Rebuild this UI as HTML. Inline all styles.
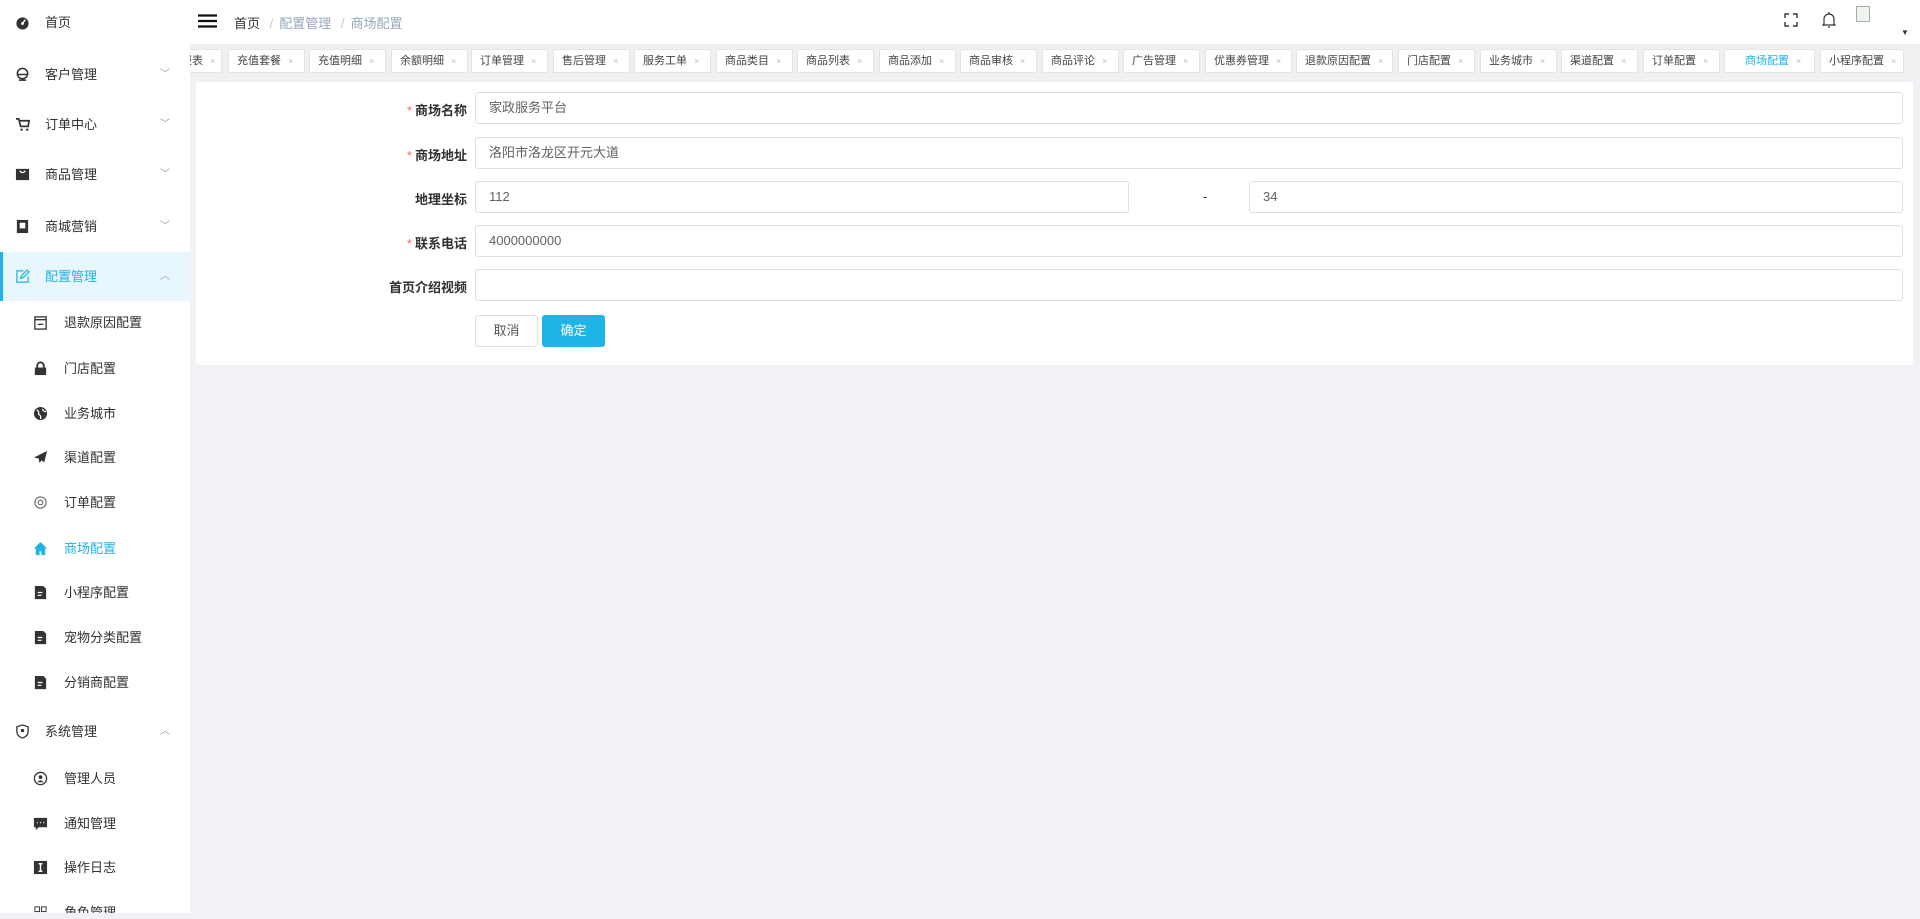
<!DOCTYPE html>
<html><head><meta charset="utf-8"><style>
*{margin:0;padding:0;box-sizing:border-box}
body{width:1920px;height:919px;background:#f0f2f5;font-family:"Liberation Sans","Noto Sans CJK SC",sans-serif;font-size:13px;color:#303133;position:relative;overflow:hidden}
.side{position:absolute;left:0;top:0;width:190px;height:913px;background:#fff;overflow:hidden}
.mi{position:absolute;left:0;width:190px;height:20px;line-height:20px;color:#303133;font-size:13px}
.mi .ic{position:absolute;top:2px;width:15px;height:15px}
.mi .tx{position:absolute}
.mi .ch{position:absolute;left:160px;top:0;color:#999;font-size:10px}
.top .ic{left:15px}.top .tx{left:45px}
.sub .ic{left:33px}.sub .tx{left:64px}
.act{position:absolute;left:0;top:252px;width:190px;height:49px;background:#e8f6fd;border-left:3px solid #1fb4e6}
.header{position:absolute;left:190px;top:0;width:1730px;height:44px;background:#fff}
.tabbar{position:absolute;left:190px;top:44px;width:1730px;height:34px;background:#f0f0f0;overflow:hidden}
.tab{position:absolute;top:5px;height:24px;line-height:22px;background:#fff;border:1px solid #e4e4e4;font-size:11px;color:#444;padding-left:8px;white-space:nowrap}
.tab i{font-style:normal;color:#bbb;font-size:9px;margin-left:7px}
.card{position:absolute;left:196px;top:82px;width:1717px;height:283px;background:#fff;border-radius:3px}
.lbl{position:absolute;right:1453px;font-size:13px;color:#303133;font-weight:bold;text-align:right;white-space:nowrap}
.lbl b{color:#f56c6c;font-weight:normal;margin-right:3px}
.inp{position:absolute;height:32px;border:1px solid #dcdfe6;border-radius:3px;padding-left:13px;line-height:30px;color:#606266;font-size:13px}
.btn{position:absolute;height:32px;border-radius:3px;line-height:30px;text-align:center;font-size:13px}
</style></head><body>
<div class="side">
<div class="act"></div>
<div class="mi top" style="top:13px"><svg class="ic" viewBox="0 0 16 16"><circle cx="8" cy="9" r="6.5" fill="#333"/><circle cx="8" cy="9" r="1.5" fill="#fff"/><path d="M8 9 L11 5" stroke="#fff" stroke-width="1.5"/></svg><span class="tx">首页</span></div>
<div class="mi top" style="top:65px"><svg class="ic" viewBox="0 0 16 16"><circle cx="8" cy="7" r="5.5" fill="none" stroke="#333" stroke-width="1.6"/><path d="M3 8h10M4 14h8" stroke="#333" stroke-width="1.6"/></svg><span class="tx">客户管理</span><span class="ch">﹀</span></div>
<div class="mi top" style="top:115px"><svg class="ic" viewBox="0 0 16 16"><path d="M1 2h3l2 8h8l1-6H5" fill="none" stroke="#333" stroke-width="1.8"/><circle cx="7" cy="13.5" r="1.3" fill="#333"/><circle cx="13" cy="13.5" r="1.3" fill="#333"/></svg><span class="tx">订单中心</span><span class="ch">﹀</span></div>
<div class="mi top" style="top:165px"><svg class="ic" viewBox="0 0 16 16"><rect x="1" y="2" width="14" height="12" fill="#333"/><path d="M5 4q3 4 6 0" stroke="#fff" fill="none" stroke-width="1.3"/></svg><span class="tx">商品管理</span><span class="ch">﹀</span></div>
<div class="mi top" style="top:217px"><svg class="ic" viewBox="0 0 16 16"><rect x="2" y="1" width="12" height="14" fill="#333"/><rect x="5" y="4" width="6" height="6" fill="#fff"/></svg><span class="tx">商城营销</span><span class="ch">﹀</span></div>
<div class="mi top" style="top:267px;color:#1fb4e6"><svg class="ic" viewBox="0 0 16 16"><path d="M9 2H2v12h12V8M6 10l1-3 6-6 2 2-6 6z" fill="none" stroke="#1fb4e6" stroke-width="1.3"/></svg><span class="tx">配置管理</span><span class="ch">︿</span></div>
<div class="mi sub" style="top:313px"><svg class="ic" viewBox="0 0 16 16"><rect x="2" y="2" width="12" height="13" fill="none" stroke="#333" stroke-width="1.4"/><path d="M2 5h12M5 10h6" stroke="#333" stroke-width="1.4"/></svg><span class="tx">退款原因配置</span></div>
<div class="mi sub" style="top:359px"><svg class="ic" viewBox="0 0 16 16"><path d="M4.5 7V5a3.5 3.5 0 0 1 7 0v2" fill="none" stroke="#333" stroke-width="2"/><rect x="2" y="7" width="12" height="8" fill="#333"/></svg><span class="tx">门店配置</span></div>
<div class="mi sub" style="top:404px"><svg class="ic" viewBox="0 0 16 16"><circle cx="8" cy="8" r="7" fill="#333"/><path d="M4 4q3 2 2 5 3 1 2 5M10 3q1 3 4 3" stroke="#fff" fill="none" stroke-width="1.3"/></svg><span class="tx">业务城市</span></div>
<div class="mi sub" style="top:448px"><svg class="ic" viewBox="0 0 16 16"><path d="M15 1L1 8l5 1 1 5 2-3 3 2z" fill="#333"/></svg><span class="tx">渠道配置</span></div>
<div class="mi sub" style="top:493px"><svg class="ic" viewBox="0 0 16 16"><circle cx="8" cy="8" r="6" fill="none" stroke="#666" stroke-width="1.2"/><circle cx="8" cy="8" r="2.5" fill="none" stroke="#666" stroke-width="1.2"/></svg><span class="tx">订单配置</span></div>
<div class="mi sub" style="top:539px;color:#1fb4e6"><svg class="ic" viewBox="0 0 16 16"><path d="M8 1L1 8h2v7h4v-4h2v4h4V8h2z" fill="#1fb4e6"/></svg><span class="tx">商场配置</span></div>
<div class="mi sub" style="top:583px"><svg class="ic" viewBox="0 0 16 16"><path d="M2 1h9l3 3v11H2z" fill="#333"/><path d="M5 8h5M5 11h4" stroke="#fff" stroke-width="1.3"/></svg><span class="tx">小程序配置</span></div>
<div class="mi sub" style="top:628px"><svg class="ic" viewBox="0 0 16 16"><path d="M2 1h9l3 3v11H2z" fill="#333"/><path d="M5 8h5M5 11h4" stroke="#fff" stroke-width="1.3"/></svg><span class="tx">宠物分类配置</span></div>
<div class="mi sub" style="top:673px"><svg class="ic" viewBox="0 0 16 16"><path d="M2 1h9l3 3v11H2z" fill="#333"/><path d="M5 8h5M5 11h4" stroke="#fff" stroke-width="1.3"/></svg><span class="tx">分销商配置</span></div>
<div class="mi top" style="top:722px"><svg class="ic" viewBox="0 0 16 16"><path d="M8 1l6 2v5q0 5-6 7-6-2-6-7V3z" fill="none" stroke="#333" stroke-width="1.4"/><circle cx="8" cy="7" r="1.8" fill="#333"/></svg><span class="tx">系统管理</span><span class="ch">︿</span></div>
<div class="mi sub" style="top:769px"><svg class="ic" viewBox="0 0 16 16"><circle cx="8" cy="8" r="6.5" fill="none" stroke="#333" stroke-width="1.4"/><circle cx="8" cy="6.5" r="2" fill="#333"/><path d="M4.5 12q3.5-4 7 0" fill="#333"/></svg><span class="tx">管理人员</span></div>
<div class="mi sub" style="top:814px"><svg class="ic" viewBox="0 0 16 16"><path d="M1 2h14v10H6l-3 3v-3H1z" fill="#333"/><path d="M4 7h1M7.5 7h1M11 7h1" stroke="#fff" stroke-width="1.5"/></svg><span class="tx">通知管理</span></div>
<div class="mi sub" style="top:858px"><svg class="ic" viewBox="0 0 16 16"><rect x="1" y="1" width="14" height="14" fill="#333"/><path d="M6 4h4M8 4v8M6 12h4" stroke="#fff" stroke-width="1.5"/></svg><span class="tx">操作日志</span></div>
<div class="mi sub" style="top:903px"><svg class="ic" viewBox="0 0 16 16"><rect x="2" y="2" width="5" height="5" fill="none" stroke="#333"/><rect x="9" y="2" width="5" height="5" fill="none" stroke="#333"/><rect x="2" y="9" width="5" height="5" fill="none" stroke="#333"/><rect x="9" y="9" width="5" height="5" fill="none" stroke="#333"/></svg><span class="tx">角色管理</span></div>
</div>
<div class="header">
<svg style="position:absolute;left:8px;top:14px" width="19" height="14" viewBox="0 0 19 14"><path d="M0 1.5h19M0 7h19M0 12.5h19" stroke="#111" stroke-width="2.2"/></svg>
<div style="position:absolute;left:44px;top:13px;font-size:13px;color:#303133">首页 <span style="color:#c0c4cc;margin:0 6px">/</span><span style="color:#97a8be">配置管理</span> <span style="color:#c0c4cc;margin:0 6px">/</span><span style="color:#97a8be">商场配置</span></div>
<svg style="position:absolute;left:1594px;top:13px" width="14" height="14" viewBox="0 0 14 14"><path d="M1 5V1h4M9 1h4v4M13 9v4H9M5 13H1V9" stroke="#333" stroke-width="1.4" fill="none"/></svg>
<svg style="position:absolute;left:1632px;top:11px" width="14" height="18" viewBox="0 0 14 18"><path d="M2 13V8a5 5 0 0 1 10 0v5l1 1H1z M7 1v2M6 16h2" stroke="#333" stroke-width="1.2" fill="none"/></svg>
<div style="position:absolute;left:1666px;top:6px;width:14px;height:16px;border:1px solid #aaa;background:#eef4ee"></div>
<div style="position:absolute;left:1711px;top:28px;font-size:8px;color:#333">▼</div>
</div>
<div class="tabbar">
<div class="tab" style="left:-40px;width:72px">余额报表<i>×</i></div>
<div class="tab" style="left:38px;width:77px">充值套餐<i>×</i></div>
<div class="tab" style="left:119px;width:77px">充值明细<i>×</i></div>
<div class="tab" style="left:201px;width:77px">余额明细<i>×</i></div>
<div class="tab" style="left:281px;width:77px">订单管理<i>×</i></div>
<div class="tab" style="left:363px;width:77px">售后管理<i>×</i></div>
<div class="tab" style="left:444px;width:77px">服务工单<i>×</i></div>
<div class="tab" style="left:526px;width:77px">商品类目<i>×</i></div>
<div class="tab" style="left:607px;width:77px">商品列表<i>×</i></div>
<div class="tab" style="left:689px;width:77px">商品添加<i>×</i></div>
<div class="tab" style="left:770px;width:77px">商品审核<i>×</i></div>
<div class="tab" style="left:852px;width:77px">商品评论<i>×</i></div>
<div class="tab" style="left:933px;width:77px">广告管理<i>×</i></div>
<div class="tab" style="left:1015px;width:87px">优惠券管理<i>×</i></div>
<div class="tab" style="left:1106px;width:97px">退款原因配置<i>×</i></div>
<div class="tab" style="left:1208px;width:77px">门店配置<i>×</i></div>
<div class="tab" style="left:1290px;width:77px">业务城市<i>×</i></div>
<div class="tab" style="left:1371px;width:77px">渠道配置<i>×</i></div>
<div class="tab" style="left:1453px;width:77px">订单配置<i>×</i></div>
<div class="tab" style="left:1534px;width:91px;color:#1fb4e6;padding-left:20px">商场配置<i>×</i></div>
<div class="tab" style="left:1630px;width:84px">小程序配置<i>×</i></div>
</div>
<div class="card"></div>
<div class="lbl" style="top:100px"><b>*</b>商场名称</div>
<div class="inp" style="left:475px;top:92px;width:1428px">家政服务平台</div>
<div class="lbl" style="top:145px"><b>*</b>商场地址</div>
<div class="inp" style="left:475px;top:137px;width:1428px">洛阳市洛龙区开元大道</div>
<div class="lbl" style="top:189px">地理坐标</div>
<div class="inp" style="left:475px;top:181px;width:654px">112</div>
<div style="position:absolute;left:1203px;top:189px">-</div>
<div class="inp" style="left:1249px;top:181px;width:654px">34</div>
<div class="lbl" style="top:233px"><b>*</b>联系电话</div>
<div class="inp" style="left:475px;top:225px;width:1428px">4000000000</div>
<div class="lbl" style="top:277px">首页介绍视频</div>
<div class="inp" style="left:475px;top:269px;width:1428px"></div>
<div class="btn" style="left:475px;top:315px;width:63px;border:1px solid #dcdfe6;color:#555">取消</div>
<div class="btn" style="left:542px;top:315px;width:63px;background:#1fb4e6;color:#fff;border:1px solid #1fb4e6">确定</div>
</body></html>
